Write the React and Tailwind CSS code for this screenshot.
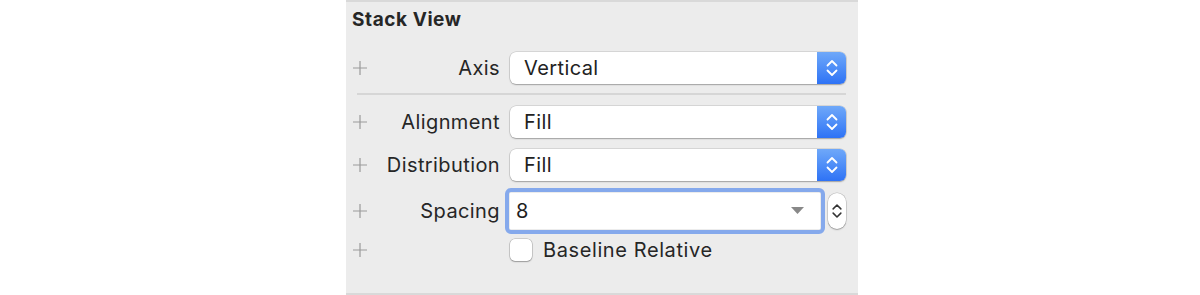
const font = { fontFamily: 'Inter, "Noto Sans", sans-serif' };

const Plus = () => (
    <svg width="14" height="14" viewBox="0 0 14 14" className="shrink-0">
        <path d="M7 0v14M0 7h14" stroke="#9a9a9a" strokeWidth="1.2" />
    </svg>
);

const Chevrons = ({ color = 'white', w = 14 }) => (
    <svg width={w} height="22" viewBox="0 0 14 22">
        <path d="M2.5 8.5L7 4l4.5 4.5M2.5 13.5L7 18l4.5-4.5" fill="none" stroke={color} strokeWidth="1.8" strokeLinecap="round" strokeLinejoin="round" />
    </svg>
);

const Popup = ({ value }) => (
    <div className="flex h-[32px] w-[336px] shrink-0 items-stretch rounded-[6px] bg-white shadow-[0_0_0_0.5px_rgba(0,0,0,0.18),0_1px_1.5px_rgba(0,0,0,0.25)]">
        <div className="flex flex-1 items-center pl-[14px] text-[20px] tracking-[0.02em] text-[#222]">{value}</div>
        <div className="flex w-[29px] items-center justify-center rounded-r-[6px] bg-gradient-to-b from-[#6fa8f9] to-[#2e72f5]">
            <Chevrons />
        </div>
    </div>
);

const Label = ({ children }) => (
    <div className="flex w-[148px] shrink-0 items-center justify-between pl-[1px]">
        <Plus />
        {children && <span className="text-[20px] tracking-[0.02em] text-[#262626]">{children}</span>}
    </div>
);

export default function App() {
    return (
        <div className="flex h-[295px] w-[1200px] justify-center bg-white" style={font}>
            <div className="ml-[4px] flex h-[295px] w-[512px] flex-col border-t-2 border-b-2 border-[#d9d9d9] bg-[#ececec] pl-[6px] pr-[12px]">
                <div className="pt-[4px] text-[19px] font-bold tracking-[0.03em] text-[#262626]">Stack View</div>
                <div className="mt-[17px] flex items-center">
                    <Label>Axis</Label>
                    <div className="ml-[10px]"><Popup value="Vertical" /></div>
                </div>
                <div className="mt-[9px] ml-[5px] h-[2px] bg-[#d6d6d6]" />
                <div className="mt-[11px] flex items-center">
                    <Label>Alignment</Label>
                    <div className="ml-[10px]"><Popup value="Fill" /></div>
                </div>
                <div className="mt-[11px] flex items-center">
                    <Label>Distribution</Label>
                    <div className="ml-[10px]"><Popup value="Fill" /></div>
                </div>
                <div className="mt-[7px] flex items-center">
                    <Label>Spacing</Label>
                    <div className="ml-[5px] flex items-center">
                        <div className="rounded-[6px] border-[4px] border-[#85a9ec] p-px">
                            <div className="flex h-[36px] w-[310px] items-center justify-between bg-white pl-[6px] pr-[16px] text-[20px] text-[#1e1e1e]">
                                <span>8</span>
                                <svg width="13" height="7" viewBox="0 0 13 7">
                                    <path d="M0 0h13L6.5 7z" fill="#888" />
                                </svg>
                            </div>
                        </div>
                        <div className="ml-[3px] flex h-[36px] w-[18px] items-center justify-center rounded-[9px] bg-white shadow-[0_0_0_0.5px_rgba(0,0,0,0.2),0_1px_1.5px_rgba(0,0,0,0.25)]">
                            <Chevrons color="#333" w={12} />
                        </div>
                    </div>
                </div>
                <div className="mt-[1px] flex items-center">
                    <Label />
                    <div className="ml-[10px] h-[22px] w-[22px] shrink-0 rounded-[5px] bg-white shadow-[0_0_0_0.5px_rgba(0,0,0,0.25),0_1px_1.5px_rgba(0,0,0,0.25)]" />
                    <span className="ml-[11px] text-[20px] tracking-[0.03em] text-[#262626]">Baseline Relative</span>
                </div>
            </div>
        </div>
    );
}
